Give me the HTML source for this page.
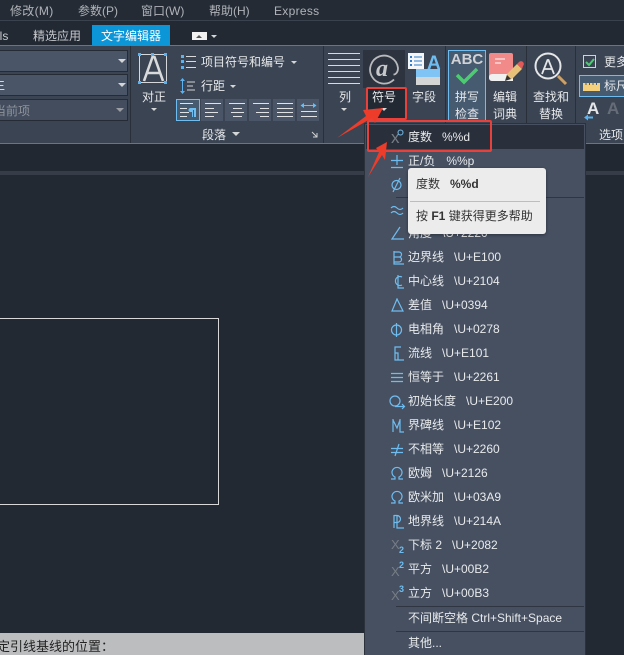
<!DOCTYPE html>
<html><head><meta charset="utf-8">
<style>
*{margin:0;padding:0;box-sizing:border-box}
html,body{width:624px;height:655px;overflow:hidden;background:#222932}
body{position:relative;font-family:"Liberation Sans","Noto Sans CJK SC",sans-serif;font-size:12px;color:#e6e8ea}
.a{position:absolute}
.t{position:absolute;white-space:nowrap;line-height:16px}
.c{text-align:center}
.combo{position:absolute;left:-4px;width:132px;height:22px;background:#4a5568;border:1px solid #262c36}
.tri{position:absolute;width:0;height:0;border-left:4px solid transparent;border-right:4px solid transparent;border-top:4px solid #d4d6d8}
.tri.s{border-left-width:3px;border-right-width:3px;border-top-width:3px}
.btn{position:absolute;top:99px;width:22px;height:22px;background:#4a5568}
.row{position:absolute;left:408px;white-space:nowrap;line-height:16px;color:#e8eaec}
.sep{position:absolute;background:#2f3641;height:1px}
.g{position:absolute;top:46px;width:1px;height:97px;background:#2a303a}
.ic{stroke:#6fbdf0;stroke-width:1.2}
</style></head>
<body>
<!-- menu bar -->
<div class="a" style="left:0;top:0;width:624px;height:20px;background:#252b35"></div>
<div class="a" style="left:0;top:20px;width:624px;height:1px;background:#3a424e"></div>
<div class="t" style="left:10px;top:3px;color:#b0b4b9;letter-spacing:.3px">修改(M)</div>
<div class="t" style="left:78px;top:3px;color:#b0b4b9">参数(P)</div>
<div class="t" style="left:141px;top:3px;color:#b0b4b9">窗口(W)</div>
<div class="t" style="left:209px;top:3px;color:#b0b4b9">帮助(H)</div>
<div class="t" style="left:274px;top:3px;color:#b0b4b9;letter-spacing:.3px">Express</div>
<!-- tabs -->
<div class="a" style="left:0;top:21px;width:624px;height:24px;background:#222933"></div>
<div class="t" style="left:-7px;top:28px;color:#c6c9cc">ols</div>
<div class="t" style="left:33px;top:28px;color:#c6c9cc">精选应用</div>
<div class="a" style="left:92px;top:25px;width:78px;height:20px;background:#0c96d8"></div>
<div class="t" style="left:101px;top:28px;color:#fff">文字编辑器</div>
<div class="a" style="left:192px;top:32px;width:15px;height:8px;background:#f2f2f2"></div>
<div class="tri s" style="left:196px;top:35px;border-top:0;border-bottom:3px solid #555"></div>
<div class="tri s" style="left:211px;top:35px"></div>
<!-- ribbon -->
<div class="a" style="left:0;top:45px;width:624px;height:99px;background:#3b4453;border-top:1px solid #1b8fc9;border-bottom:1px solid #1b8fc9"></div>
<div class="a" style="left:0;top:144px;width:624px;height:27px;background:#212831"></div>
<div class="a" style="left:0;top:171px;width:624px;height:4px;background:#363d48"></div>
<div class="a" style="left:0;top:175px;width:624px;height:458px;background:#222932"></div>
<div class="g" style="left:130px"></div>
<div class="g" style="left:323px"></div>
<div class="g" style="left:445px"></div>
<div class="g" style="left:526px"></div>
<div class="g" style="left:575px"></div>

<!-- combos -->
<div class="combo" style="top:50px"></div><div class="tri" style="left:118px;top:59px"></div>
<div class="combo" style="top:74px"></div><div class="tri" style="left:118px;top:83px"></div>
<div class="t" style="left:-7px;top:77px">生</div>
<div class="combo" style="top:99px;background:#434d5e"></div><div class="tri" style="left:116px;top:108px;border-top-color:#9a9ea4"></div>
<div class="t" style="left:-6px;top:103px;color:#8e939a">当前项</div>

<!-- justify -->
<svg class="a" style="left:138px;top:52px" width="32" height="34" viewBox="0 0 32 34" fill="none">
<rect x="1.5" y="2.5" width="27" height="28" stroke="#d5d7da"/>
<path d="M6 29 14.500 5h2L25 29M9.500 21h12" stroke="#d8dadc" stroke-width="2.600"/>
<g fill="#5cb2ee"><rect x="0" y="1" width="3" height="3"/><rect x="13" y="1" width="3" height="3"/><rect x="26" y="1" width="3" height="3"/><rect x="0" y="29" width="3" height="3"/><rect x="26" y="29" width="3" height="3"/></g>
</svg>
<div class="t c" style="left:138px;top:89px;width:32px;font-size:12px">对正</div>
<div class="tri s" style="left:151px;top:108px"></div>
<!-- list -->
<svg class="a" style="left:180px;top:54px" width="20" height="16"><g fill="#5cb2ee"><rect x="1" y="1" width="3" height="3"/><rect x="1" y="6" width="3" height="3"/><rect x="1" y="12" width="3" height="3"/></g><g fill="#d8dadc"><rect x="6" y="2" width="10" height="1"/><rect x="6" y="7" width="10" height="1"/><rect x="6" y="13" width="10" height="1"/></g></svg>
<div class="t" style="left:201px;top:54px">项目符号和编号</div>
<div class="tri s" style="left:291px;top:61px"></div>
<svg class="a" style="left:179px;top:77px" width="20" height="18" fill="none"><path d="M3.500 2v14" stroke="#5cb2ee"/><path d="M1 4l2.500-3L6 4zM1 14l2.500 3L6 14z" fill="#5cb2ee"/><path d="M8 5h8M8 9h6M8 13h8" stroke="#d0d2d6"/></svg>
<div class="t" style="left:201px;top:78px">行距</div>
<div class="tri s" style="left:230px;top:85px"></div>
<!-- align -->
<div class="btn" style="left:176px;height:22px;width:24px;background:#465a70;border:1px solid #6fbdf0"></div>
<svg class="a" style="left:179px;top:102px" width="18" height="16" fill="none"><path d="M1 1.500h13M1 6.500h7M1 10.500h9M1 14.500h7" stroke="#e0e2e4"/><path d="M11 6h6v9h-2V8h-1v7h-1v-5h-1a2 2 0 0 1-1-4z" fill="#6fbdf0"/></svg>
<div class="btn" style="left:201px"></div><svg class="a" style="left:204px;top:102px" width="18" height="16"><path d="M1 1.500h16M1 6.500h9M1 10.500h13M1 14.500h9" stroke="#e0e2e4"/></svg>
<div class="btn" style="left:225px"></div><svg class="a" style="left:228px;top:102px" width="18" height="16"><path d="M1 1.500h16M5 6.500h9M3 10.500h13M5 14.500h9" stroke="#e0e2e4"/></svg>
<div class="btn" style="left:249px"></div><svg class="a" style="left:252px;top:102px" width="18" height="16"><path d="M1 1.500h16M8 6.500h9M4 10.500h13M8 14.500h9" stroke="#e0e2e4"/></svg>
<div class="btn" style="left:273px"></div><svg class="a" style="left:276px;top:102px" width="18" height="16"><path d="M1 1.500h16M1 6.500h16M1 10.500h16M1 14.500h16" stroke="#e0e2e4"/></svg>
<div class="btn" style="left:297px"></div><svg class="a" style="left:300px;top:102px" width="18" height="16" fill="none"><path d="M1 3.500h15" stroke="#6fbdf0"/><path d="M4 1 0.500 3.500 4 6zM13 1l3.500 2.500L13 6z" fill="#6fbdf0"/><path d="M1 9.500h16M1 14.500h16" stroke="#e0e2e4"/></svg>
<div class="t" style="left:202px;top:127px">段落</div>
<div class="tri" style="left:232px;top:132px"></div>
<svg class="a" style="left:311px;top:131px" width="8" height="8" fill="none"><path d="M1 1l5 5M6 2v4H2" stroke="#d0d2d6"/></svg>

<!-- columns -->
<svg class="a" style="left:327px;top:52px" width="34" height="34"><path d="M1 1.500h32M1 7.500h32M1 13.500h32M1 19.500h32M1 25.500h32M1 31.500h32" stroke="#d8dadc"/></svg>
<div class="t c" style="left:335px;top:89px;width:20px">列</div>
<div class="tri s" style="left:341px;top:108px"></div>
<!-- symbol -->
<div class="a" style="left:363px;top:50px;width:42px;height:38px;background:#2e343f"></div>
<div class="a" style="left:366px;top:88px;width:39px;height:32px;background:#232933"></div>
<svg class="a" style="left:363px;top:50px" width="42" height="38" fill="none">
<path d="M31 29.500A14 14 0 1 1 35 18c0 4-2 6.500-4.500 6.500" stroke="#b8babd" stroke-width="1.800"/>
<text x="13" y="26" font-family="Liberation Serif" font-style="italic" font-weight="bold" font-size="24" fill="#c6c8ca">a</text>
</svg>
<div class="t" style="left:372px;top:89px">符号</div>
<div class="tri s" style="left:381px;top:108px"></div>
<!-- field -->
<svg class="a" style="left:408px;top:53px" width="34" height="33">
<rect x="0" y="0" width="16" height="16" fill="#f4f6f8"/>
<path d="M6 4h8M6 8h8M6 12h8" stroke="#2c7fd0"/><path d="M2 3h2v2H2zM2 7h2v2H2zM2 11h2v2H2z" fill="#2c7fd0"/>
<rect x="8" y="16" width="24" height="8" fill="#7fc4f4"/><rect x="8" y="24" width="24" height="8" fill="#d5d5d5"/>
<text x="19" y="16" font-family="Liberation Sans" font-weight="bold" font-size="19" fill="#6fbdf0">A</text>
</svg>
<div class="t" style="left:412px;top:89px">字段</div>
<!-- spell -->
<div class="a" style="left:448px;top:50px;width:38px;height:72px;background:#465a70;border:1px solid #6fbdf0"></div>
<div class="t c" style="left:448px;top:52px;width:38px;font:bold 15px/16px 'Liberation Sans',sans-serif;color:#d0d2d6">ABC</div>
<svg class="a" style="left:455px;top:67px" width="24" height="18" fill="none"><path d="M2 8l7 7L22 2" stroke="#4ccb72" stroke-width="3.500"/></svg>
<div class="t" style="left:455px;top:89px">拼写</div>
<div class="t" style="left:455px;top:106px">检查</div>
<!-- dict -->
<svg class="a" style="left:488px;top:52px" width="36" height="34">
<path d="M3 1h20a2 2 0 0 1 2 2v26H4a3 3 0 0 1-3-3V3a2 2 0 0 1 2-2z" fill="#f28a8a"/>
<path d="M1 25a3 3 0 0 1 3-3h21v7H4a3 3 0 0 1-3-3z" fill="#f0f0f0"/>
<path d="M7 7h10M7 11h6" stroke="#fff"/>
<path d="M17 28l2-6 10-10 5 5-10 10z" fill="#e8c078"/><path d="M29 12l2-2a2.500 2.500 0 0 1 4 4l-1 3z" fill="#e05a5a"/><path d="M17 29l2-6 4 4z" fill="#333"/>
</svg>
<div class="t" style="left:493px;top:89px">编辑</div>
<div class="t" style="left:493px;top:106px">词典</div>
<!-- find -->
<svg class="a" style="left:532px;top:51px" width="36" height="35" fill="none">
<circle cx="16" cy="15" r="12.500" stroke="#e4e6e8" stroke-width="2"/>
<path d="M10 23l5.500-14h1L22 23M12 18h8" stroke="#e4e6e8" stroke-width="1.800"/>
<path d="M26 25l8 8" stroke="#d0a060" stroke-width="3"/>
</svg>
<div class="t" style="left:533px;top:89px">查找和</div>
<div class="t" style="left:539px;top:106px">替换</div>
<!-- options -->
<svg class="a" style="left:583px;top:55px" width="14" height="14" fill="none"><rect x=".5" y=".5" width="12" height="12" stroke="#d0d2d6"/><path d="M3 7l3 3 5-6" stroke="#4ccb72" stroke-width="2"/></svg>
<div class="t" style="left:604px;top:54px">更多</div>
<div class="a" style="left:579px;top:75px;width:50px;height:22px;background:#465a70;border:1px solid #6fbdf0"></div>
<svg class="a" style="left:583px;top:82px" width="17" height="9"><rect width="17" height="8" y="1" fill="#f4cf7c"/><path d="M3 0v3M6.500 0v3M10 0v3M13.500 0v3" stroke="#465a70"/></svg>
<div class="t" style="left:604px;top:78px">标尺</div>
<div class="t" style="left:587px;top:98px;font:bold 17px/22px 'Liberation Sans',sans-serif;color:#e4e6e8">A</div>
<div class="t" style="left:607px;top:98px;font:bold 17px/22px 'Liberation Sans',sans-serif;color:#666d78">A</div>
<svg class="a" style="left:583px;top:114px" width="11" height="7"><path d="M1 3.500 5 .5v2h5v2H5v2z" fill="#5cb2ee"/></svg>
<div class="t" style="left:599px;top:127px">选项</div>

<!-- drawing -->
<div class="a" style="left:-2px;top:318px;width:221px;height:187px;border:1px solid #d8d8d8"></div>
<!-- command line -->
<div class="a" style="left:0;top:633px;width:364px;height:22px;background:#bcbdbf"></div>
<div class="t" style="left:-3px;top:639px;color:#222;font-size:13px">定引线基线的位置：</div>

<!-- dropdown -->
<div class="a" style="left:364px;top:123px;width:222px;height:532px;background:#465061;border:1px solid #2c323c;border-bottom:0"></div>
<div class="a" style="left:366px;top:125px;width:218px;height:24px;background:#2a303b"></div>
<div class="t" style="left:391px;top:130px;font-size:17px;color:#777d86">x</div>
<svg class="a" style="left:397px;top:129px" width="8" height="8" fill="none"><circle cx="3.500" cy="3.500" r="2.500" stroke="#6fbdf0"/></svg>
<div class="row" style="top:129px">度数&nbsp;&nbsp;&nbsp;%%d</div>
<svg class="a" style="left:391px;top:154px" width="14" height="15" fill="none"><path class="ic" d="M0 6.500h12M6 1v10M0 13.500h12"/></svg>
<div class="row" style="top:153px">正/负&nbsp;&nbsp;&nbsp;&#8202;%%p</div>
<svg class="a" style="left:390px;top:177px" width="14" height="16" fill="none"><circle class="ic" cx="6.500" cy="8" r="4.500"/><path class="ic" d="M3 15 10 1"/></svg>
<div class="sep" style="left:396px;top:197px;width:188px"></div>
<svg class="a" style="left:390px;top:204px" width="14" height="12" fill="none"><path class="ic" d="M1 4c2-2 4-2 6 0s4 2 6 0M1 9c2-2 4-2 6 0s4 2 6 0"/></svg>
<svg class="a" style="left:391px;top:226px" width="14" height="14" fill="none"><path class="ic" d="M9 1 1 13h12"/></svg>
<div class="row" style="top:225px">角度&nbsp;&nbsp;&nbsp;\U+2220</div>
<svg class="a" style="left:392px;top:250px" width="14" height="16" fill="none"><path class="ic" d="M2 1v13h10M2 2h5a2.500 2.500 0 0 1 0 5H2M2 7h5a2.500 2.500 0 0 1 0 5H2"/></svg>
<div class="row" style="top:249px">边界线&nbsp;&nbsp;&nbsp;\U+E100</div>
<svg class="a" style="left:392px;top:274px" width="14" height="16" fill="none"><path class="ic" d="M10 3a4.500 4.500 0 1 0 0 8M6 1v13h6"/></svg>
<div class="row" style="top:273px">中心线&nbsp;&nbsp;&nbsp;\U+2104</div>
<svg class="a" style="left:391px;top:298px" width="14" height="16" fill="none"><path class="ic" d="M6 1 1 13h11z"/></svg>
<div class="row" style="top:297px">差值&nbsp;&nbsp;&nbsp;\U+0394</div>
<svg class="a" style="left:390px;top:322px" width="14" height="16" fill="none"><circle class="ic" cx="6.500" cy="8" r="5"/><path class="ic" d="M6.500 1v14"/></svg>
<div class="row" style="top:321px">电相角&nbsp;&nbsp;&nbsp;\U+0278</div>
<svg class="a" style="left:392px;top:346px" width="14" height="16" fill="none"><path class="ic" d="M9 1H3v13h9M3 7h3v7"/></svg>
<div class="row" style="top:345px">流线&nbsp;&nbsp;&nbsp;\U+E101</div>
<svg class="a" style="left:390px;top:372px" width="14" height="12" fill="none"><path class="ic" d="M1 1.500h12M1 5.500h12M1 9.500h12"/></svg>
<div class="row" style="top:369px">恒等于&nbsp;&nbsp;&nbsp;\U+2261</div>
<svg class="a" style="left:388px;top:394px" width="18" height="16" fill="none"><circle class="ic" cx="7" cy="7" r="5"/><path class="ic" d="M7 12.500h9M14 10l2.500 2.500L14 15"/></svg>
<div class="row" style="top:393px">初始长度&nbsp;&nbsp;&nbsp;\U+E200</div>
<svg class="a" style="left:391px;top:418px" width="14" height="16" fill="none"><path class="ic" d="M2 1v13M2 2l4 8 3-8M9 1v13h4"/></svg>
<div class="row" style="top:417px">界碑线&nbsp;&nbsp;&nbsp;\U+E102</div>
<svg class="a" style="left:390px;top:442px" width="14" height="16" fill="none"><path class="ic" d="M1 6.500h12M1 10.500h12M9 2 5 14"/></svg>
<div class="row" style="top:441px">不相等&nbsp;&nbsp;&nbsp;\U+2260</div>
<svg class="a" style="left:390px;top:466px" width="14" height="16" fill="none"><path class="ic" d="M1 13h4V11a5 5 0 1 1 4 0v2h4"/></svg>
<div class="row" style="top:465px">欧姆&nbsp;&nbsp;&nbsp;\U+2126</div>
<svg class="a" style="left:390px;top:490px" width="14" height="16" fill="none"><path class="ic" d="M1 13h4V11a5 5 0 1 1 4 0v2h4"/></svg>
<div class="row" style="top:489px">欧米加&nbsp;&nbsp;&nbsp;\U+03A9</div>
<svg class="a" style="left:391px;top:514px" width="14" height="16" fill="none"><path class="ic" d="M3 1v13M6 1v13h7M3 1.500h3a3 3 0 0 1 0 7H3"/></svg>
<div class="row" style="top:513px">地界线&nbsp;&nbsp;&nbsp;\U+214A</div>
<div class="t" style="left:391px;top:537px;font-size:13px;color:#777d86">X</div>
<div class="t" style="left:399px;top:544px;font:bold 9px/12px 'Liberation Sans',sans-serif;color:#6fbdf0">2</div>
<div class="row" style="top:537px">下标 2&nbsp;&nbsp;&nbsp;\U+2082</div>
<div class="t" style="left:391px;top:564px;font-size:13px;color:#777d86">X</div>
<div class="t" style="left:399px;top:559px;font:bold 9px/12px 'Liberation Sans',sans-serif;color:#6fbdf0">2</div>
<div class="row" style="top:561px">平方&nbsp;&nbsp;&nbsp;\U+00B2</div>
<div class="t" style="left:391px;top:588px;font-size:13px;color:#777d86">X</div>
<div class="t" style="left:399px;top:583px;font:bold 9px/12px 'Liberation Sans',sans-serif;color:#6fbdf0">3</div>
<div class="row" style="top:585px">立方&nbsp;&nbsp;&nbsp;\U+00B3</div>
<div class="sep" style="left:396px;top:606px;width:188px"></div>
<div class="row" style="top:610px">不间断空格 Ctrl+Shift+Space</div>
<div class="sep" style="left:396px;top:631px;width:188px"></div>
<div class="row" style="top:635px">其他...</div>

<!-- tooltip -->
<div class="a" style="left:408px;top:168px;width:138px;height:66px;background:#ececec;border-radius:3px;box-shadow:0 1px 3px rgba(0,0,0,.35)"></div>
<div class="t" style="left:416px;top:176px;color:#333">度数&nbsp;&nbsp;&nbsp;<b>%%d</b></div>
<div class="a" style="left:410px;top:201px;width:130px;height:1px;background:#bdbdbd"></div>
<div class="t" style="left:416px;top:208px;color:#333">按 <b>F1</b> 键获得更多帮助</div>

<!-- red annotations -->
<div class="a" style="left:366px;top:87px;width:41px;height:33px;border:2px solid #e8403a;border-radius:2px"></div>
<div class="a" style="left:367px;top:120px;width:125px;height:32px;border:2px solid #e8403a;border-radius:2px"></div>
<svg class="a" style="left:0;top:0" width="624" height="655">
<path d="M337 138 366 116 363 110 383 108 375 123 372 118Z" fill="#ee3c2a"/>
<path d="M368 177 379 152 376 148 387 142 385 160 382 155Z" fill="#ee3c2a"/>
</svg>
</body></html>
